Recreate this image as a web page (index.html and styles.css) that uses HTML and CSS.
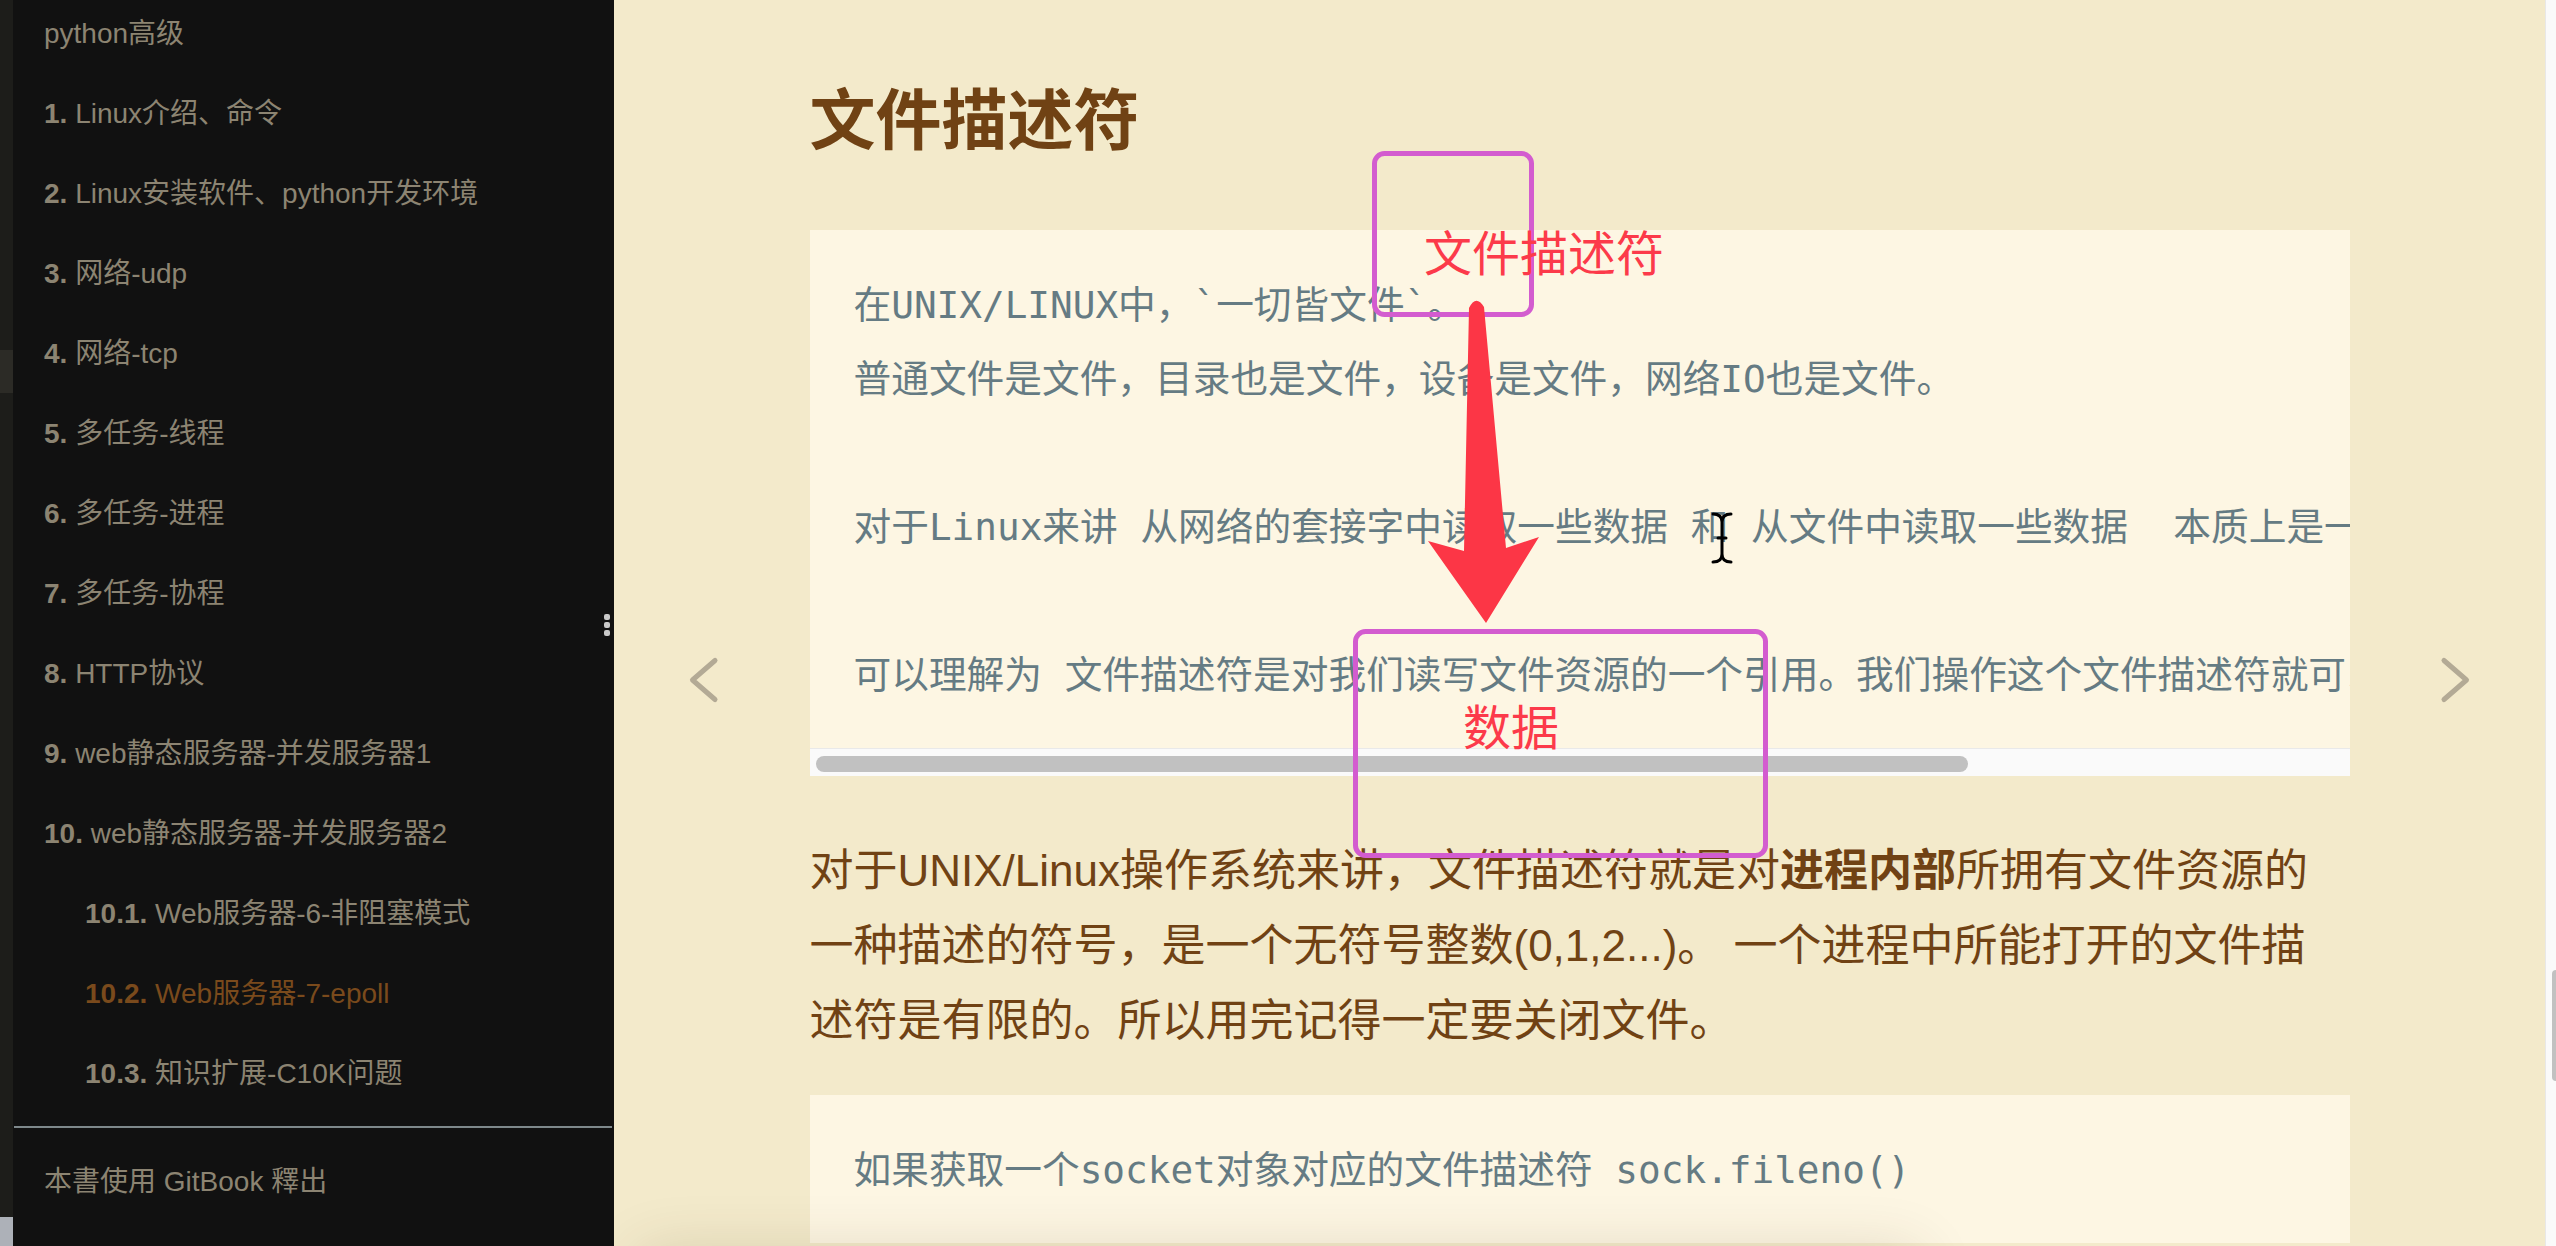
FILE: index.html
```html
<!DOCTYPE html>
<html lang="zh-CN">
<head>
<meta charset="utf-8">
<title>文件描述符</title>
<link rel="stylesheet" href="styles.css">
</head>
<body>
<div class="edge"><div class="edge-mark"></div><div class="edge-foot"></div></div>
<nav class="sidebar">
  <ul class="summary">
    <li class="header">python高级</li>
    <li><b>1.</b> Linux介绍、命令</li>
    <li><b>2.</b> Linux安装软件、python开发环境</li>
    <li><b>3.</b> 网络-udp</li>
    <li><b>4.</b> 网络-tcp</li>
    <li><b>5.</b> 多任务-线程</li>
    <li><b>6.</b> 多任务-进程</li>
    <li><b>7.</b> 多任务-协程</li>
    <li><b>8.</b> HTTP协议</li>
    <li><b>9.</b> web静态服务器-并发服务器1</li>
    <li><b>10.</b> web静态服务器-并发服务器2</li>
    <li class="sub"><b>10.1.</b> Web服务器-6-非阻塞模式</li>
    <li class="sub active"><b>10.2.</b> Web服务器-7-epoll</li>
    <li class="sub"><b>10.3.</b> 知识扩展-C10K问题</li>
    <li class="divider"></li>
    <li class="footer">本書使用 GitBook 釋出</li>
  </ul>
  <div class="grip"><span></span><span></span><span></span></div>
</nav>
<main class="book-body">
  <div class="nav">
    <svg class="chev" width="32" height="48" viewBox="0 0 32 48"><polyline points="27,4.5 4.5,24 27,43.5"/></svg>
  </div>
  <section class="page">
    <h3 class="title">文件描述符</h3>
    <div class="code-box">
<pre class="code">在UNIX/LINUX中，`一切皆文件`。
普通文件是文件，目录也是文件，设备是文件，网络IO也是文件。

对于Linux来讲 从网络的套接字中读取一些数据 和 从文件中读取一些数据  本质上是一样的

可以理解为 文件描述符是对我们读写文件资源的一个引用。我们操作这个文件描述符就可以操作文件资源的数据</pre>
      <div class="hscroll"><div class="hthumb"></div></div>
    </div>
    <p class="text">对于UNIX/Linux操作系统来讲，文件描述符就是对<b>进程内部</b>所拥有文件资源的<br>一种描述的符号，是一个无符号整数(0,1,2...)。 一个进程中所能打开的文件描<br>述符是有限的。所以用完记得一定要关闭文件。</p>
    <div class="code-box">
<pre class="code">如果获取一个socket对象对应的文件描述符 sock.fileno()</pre>
    </div>
  </section>
  <div class="nav">
    <svg class="chev" width="32" height="48" viewBox="0 0 32 48"><polyline points="5,4.5 27.5,24 5,43.5"/></svg>
  </div>
  <div class="shade"></div>
  <svg class="marks" viewBox="614 0 1931 1246" width="1931" height="1246">
    <rect class="box" x="1374.5" y="153.5" width="157" height="161" rx="10"/>
    <rect class="box" x="1355.5" y="631.5" width="410" height="224" rx="10"/>
    <text class="note" x="1424" y="271">文件描述符</text>
    <text class="note" x="1463" y="745">数据</text>
    <path class="arrow" d="M1469 308 Q1476 294 1484 307 L1506 548 L1539 537 L1486 623 L1428 541 L1464 551 Z"/>
    <path class="ibeam" d="M1713 514 C1719 514 1722 517 1722 522 C1722 517 1725 514 1731 514 M1722 522 V554 M1713 562 C1719 562 1722 559 1722 554 C1722 559 1725 562 1731 562 M1718 538 H1726"/>
  </svg>
</main>
<div class="vscroll"><div class="vthumb"></div></div>
</body>
</html>
```
FILE: styles.css
```css
* { box-sizing: border-box; }
html, body { margin: 0; padding: 0; }
body {
  display: flex;
  width: 2556px;
  height: 1246px;
  overflow: hidden;
  font-family: "Liberation Sans", "Noto Sans CJK SC", sans-serif;
  background: #f3eacb;
}
.edge {
  width: 13px;
  flex: none;
  background: #1d1d1a;
  display: flex;
  flex-direction: column;
}
.edge-mark { margin-top: 350px; height: 43px; background: #2c2b26; }
.edge-foot { margin-top: auto; height: 29px; background: #adb1b8; }

.sidebar {
  width: 601px;
  flex: none;
  background: #111111;
  position: relative;
  overflow: hidden;
}
.summary { list-style: none; margin: -6px 0 0; padding: 0; }
.summary li {
  font-size: 28px;
  line-height: 40px;
  padding: 20px 15px 20px 31px;
  color: #8c8472;
  white-space: nowrap;
}
.summary li.sub { padding-left: 72px; }
.summary li.active { color: #7a4a1c; }
.summary li.divider {
  height: 2px;
  padding: 0;
  margin: 12px 2px 14px 1px;
  background: #7e888b;
}
.grip {
  position: absolute;
  left: 591px;
  top: 614px;
  display: flex;
  flex-direction: column;
  gap: 2px;
}
.grip span { width: 6px; height: 6px; border-radius: 2px; background: #c9c9c9; }

.book-body {
  flex: 1;
  position: relative;
  display: grid;
  grid-template-columns: 180px 1fr 180px;
  align-items: start;
  overflow: hidden;
  background: #f3eacb;
}
.nav {
  height: 1246px;
  display: flex;
  align-items: center;
  justify-content: center;
  padding-top: 114px;
}
.chev polyline {
  fill: none;
  stroke: #b3aa95;
  stroke-width: 5;
  stroke-linecap: round;
  stroke-linejoin: round;
}
.page {
  width: 100%;
  max-width: 1540px;
  margin: 0 auto;
  padding-top: 82px;
  color: #704214;
}
.title {
  font-size: 66px;
  line-height: 79px;
  font-weight: 700;
  margin: 0 0 69px;
}
.code-box { background: #fdf6e3; }
.code {
  margin: 0;
  padding: 38px 44px 36px;
  font-family: "DejaVu Sans Mono", "Noto Sans CJK SC", monospace;
  font-size: 37.7px;
  line-height: 74px;
  color: #657b83;
  white-space: pre;
  overflow: hidden;
}
.hscroll {
  height: 28px;
  background: #fafafa;
  border-top: 1px solid #e9e9e9;
  padding: 7px 0 0 6px;
}
.hthumb { width: 1152px; height: 16px; border-radius: 8px; background: #c1c1c1; }
.text {
  font-size: 44px;
  line-height: 74.8px;
  margin: 58px 0 37px;
  white-space: nowrap;
}
.text b { font-weight: 700; }

.shade {
  position: absolute;
  left: 40px;
  top: 1272px;
  width: 1250px;
  height: 60px;
  box-shadow: 0 -6px 60px 14px rgba(70, 50, 10, 0.16);
}
.marks { position: absolute; left: 0; top: 0; pointer-events: none; }
.marks .box { fill: none; stroke: #d35ccf; stroke-width: 5; }
.marks .note {
  font-family: "Noto Sans CJK SC", sans-serif;
  font-size: 48px;
  fill: #fc3a4a;
}
.marks .arrow { fill: #fc3646; }
.marks .ibeam {
  fill: none;
  stroke: #000;
  stroke-width: 3;
  stroke-linecap: round;
}

.vscroll {
  width: 11px;
  flex: none;
  background: #fafafa;
  border-left: 1px solid #e8e8e8;
  overflow: hidden;
}
.vthumb {
  margin: 970px 0 0 6px;
  width: 8px;
  height: 111px;
  border-radius: 4px;
  background: #c1c1c1;
}
```
